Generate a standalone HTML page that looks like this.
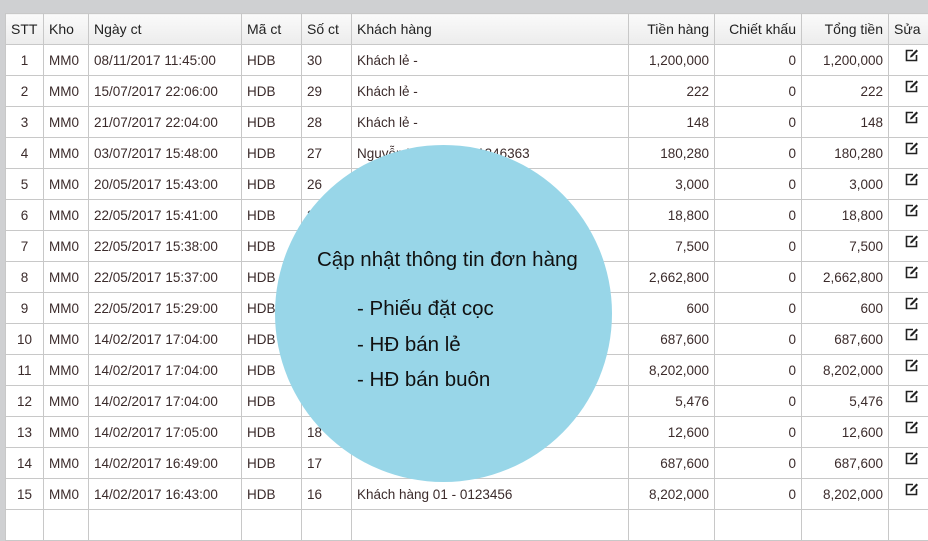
<!DOCTYPE html>
<html><head><meta charset="utf-8"><style>
body{margin:0;width:928px;height:512px;overflow:hidden;background:#cfd0d2;font-family:"Liberation Sans",Arial,sans-serif;position:relative}
table{position:absolute;left:5px;top:13px;border-collapse:collapse;background:#fff;table-layout:fixed;width:930px}
td,th{border:1px solid #c8c8c8;height:30px;padding:0 5px;font-size:13.5px;color:#3b2b2b;white-space:nowrap;overflow:hidden}
th{font-weight:normal;color:#222;text-align:left;background:linear-gradient(#fafafa,#ececec);font-size:14px}
.c{text-align:center}.r{text-align:right}
td.e{text-align:center}
td.e svg{position:relative;top:-6px;vertical-align:middle}
.circle{position:absolute;left:275px;top:145px;width:337px;height:337px;border-radius:50%;background:#98d6e8}
.t{position:absolute;font-size:20.5px;color:#111}
</style></head><body>
<svg width="0" height="0" style="position:absolute"><defs><symbol id="ed" viewBox="0 0 14 14"><path d="M8 2.5H1.5V12.5H11.5V7" fill="none" stroke="#222" stroke-width="1.6"/><path d="M5 9.5L5.5 7.5L11.5 1.5L13 3L7 9Z" fill="#222"/></symbol></defs></svg>
<table>
<colgroup><col style="width:38px"><col style="width:45px"><col style="width:153px"><col style="width:60px"><col style="width:50px"><col style="width:277px"><col style="width:86px"><col style="width:87px"><col style="width:87px"><col style="width:47px"></colgroup>
<tr><th>STT</th><th>Kho</th><th>Ngày ct</th><th>Mã ct</th><th>Số ct</th><th>Khách hàng</th><th class="r">Tiền hàng</th><th class="r">Chiết khấu</th><th class="r">Tổng tiền</th><th>Sửa</th></tr>
<tr><td class="c">1</td><td>MM0</td><td>08/11/2017 11:45:00</td><td>HDB</td><td>30</td><td>Khách lẻ -</td><td class="r">1,200,000</td><td class="r">0</td><td class="r">1,200,000</td><td class="e"><svg width="14" height="14"><use href="#ed"/></svg></td></tr>
<tr><td class="c">2</td><td>MM0</td><td>15/07/2017 22:06:00</td><td>HDB</td><td>29</td><td>Khách lẻ -</td><td class="r">222</td><td class="r">0</td><td class="r">222</td><td class="e"><svg width="14" height="14"><use href="#ed"/></svg></td></tr>
<tr><td class="c">3</td><td>MM0</td><td>21/07/2017 22:04:00</td><td>HDB</td><td>28</td><td>Khách lẻ -</td><td class="r">148</td><td class="r">0</td><td class="r">148</td><td class="e"><svg width="14" height="14"><use href="#ed"/></svg></td></tr>
<tr><td class="c">4</td><td>MM0</td><td>03/07/2017 15:48:00</td><td>HDB</td><td>27</td><td>Nguyễn Văn A - 0941346363</td><td class="r">180,280</td><td class="r">0</td><td class="r">180,280</td><td class="e"><svg width="14" height="14"><use href="#ed"/></svg></td></tr>
<tr><td class="c">5</td><td>MM0</td><td>20/05/2017 15:43:00</td><td>HDB</td><td>26</td><td></td><td class="r">3,000</td><td class="r">0</td><td class="r">3,000</td><td class="e"><svg width="14" height="14"><use href="#ed"/></svg></td></tr>
<tr><td class="c">6</td><td>MM0</td><td>22/05/2017 15:41:00</td><td>HDB</td><td>25</td><td></td><td class="r">18,800</td><td class="r">0</td><td class="r">18,800</td><td class="e"><svg width="14" height="14"><use href="#ed"/></svg></td></tr>
<tr><td class="c">7</td><td>MM0</td><td>22/05/2017 15:38:00</td><td>HDB</td><td>24</td><td></td><td class="r">7,500</td><td class="r">0</td><td class="r">7,500</td><td class="e"><svg width="14" height="14"><use href="#ed"/></svg></td></tr>
<tr><td class="c">8</td><td>MM0</td><td>22/05/2017 15:37:00</td><td>HDB</td><td>23</td><td></td><td class="r">2,662,800</td><td class="r">0</td><td class="r">2,662,800</td><td class="e"><svg width="14" height="14"><use href="#ed"/></svg></td></tr>
<tr><td class="c">9</td><td>MM0</td><td>22/05/2017 15:29:00</td><td>HDB</td><td>22</td><td></td><td class="r">600</td><td class="r">0</td><td class="r">600</td><td class="e"><svg width="14" height="14"><use href="#ed"/></svg></td></tr>
<tr><td class="c">10</td><td>MM0</td><td>14/02/2017 17:04:00</td><td>HDB</td><td>21</td><td></td><td class="r">687,600</td><td class="r">0</td><td class="r">687,600</td><td class="e"><svg width="14" height="14"><use href="#ed"/></svg></td></tr>
<tr><td class="c">11</td><td>MM0</td><td>14/02/2017 17:04:00</td><td>HDB</td><td>20</td><td></td><td class="r">8,202,000</td><td class="r">0</td><td class="r">8,202,000</td><td class="e"><svg width="14" height="14"><use href="#ed"/></svg></td></tr>
<tr><td class="c">12</td><td>MM0</td><td>14/02/2017 17:04:00</td><td>HDB</td><td>19</td><td></td><td class="r">5,476</td><td class="r">0</td><td class="r">5,476</td><td class="e"><svg width="14" height="14"><use href="#ed"/></svg></td></tr>
<tr><td class="c">13</td><td>MM0</td><td>14/02/2017 17:05:00</td><td>HDB</td><td>18</td><td></td><td class="r">12,600</td><td class="r">0</td><td class="r">12,600</td><td class="e"><svg width="14" height="14"><use href="#ed"/></svg></td></tr>
<tr><td class="c">14</td><td>MM0</td><td>14/02/2017 16:49:00</td><td>HDB</td><td>17</td><td></td><td class="r">687,600</td><td class="r">0</td><td class="r">687,600</td><td class="e"><svg width="14" height="14"><use href="#ed"/></svg></td></tr>
<tr><td class="c">15</td><td>MM0</td><td>14/02/2017 16:43:00</td><td>HDB</td><td>16</td><td>Khách hàng 01 - 0123456</td><td class="r">8,202,000</td><td class="r">0</td><td class="r">8,202,000</td><td class="e"><svg width="14" height="14"><use href="#ed"/></svg></td></tr>
<tr><td></td><td></td><td></td><td></td><td></td><td></td><td></td><td></td><td></td><td></td></tr>
</table>
<div class="circle"></div>
<div class="t" style="left:317px;top:248px">Cập nhật thông tin đơn hàng</div>
<div class="t" style="left:357px;top:297px">- Phiếu đặt cọc</div>
<div class="t" style="left:357px;top:333px">- HĐ bán lẻ</div>
<div class="t" style="left:357px;top:368px">- HĐ bán buôn</div>
</body></html>
